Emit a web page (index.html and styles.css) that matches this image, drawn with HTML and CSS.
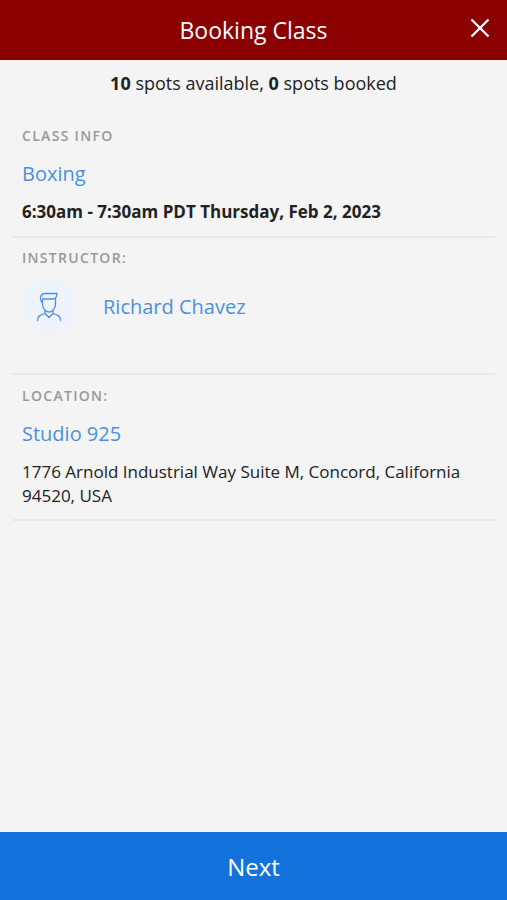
FILE: index.html
```html
<!DOCTYPE html>
<html lang="en">
<head>
<meta charset="utf-8">
<title>Booking Class</title>
<link rel="stylesheet" href="styles.css">
</head>
<body>
<header class="header">
  <h1 class="title">Booking Class</h1>
  <button class="close" aria-label="Close"><svg width="20" height="20" viewBox="0 0 20 20"><path d="M1.5 1.5 18.5 18.5M18.5 1.5 1.5 18.5" fill="none" stroke="#fff" stroke-width="2.3"/></svg></button>
</header>
<main class="content">
  <p class="spots"><b>10</b> spots available, <b>0</b> spots booked</p>
  <section class="card class-info">
    <h2 class="label">CLASS INFO</h2>
    <a class="link">Boxing</a>
    <p class="time">6:30am - 7:30am PDT Thursday, Feb 2, 2023</p>
  </section>
  <section class="card instructor">
    <h2 class="label">INSTRUCTOR:</h2>
    <div class="person">
      <span class="avatar"><svg width="26" height="30" viewBox="0 0 26 30" fill="none" stroke="#4a90e2" stroke-width="1.3" stroke-linecap="round" stroke-linejoin="round"><path d="M5.5 10C3 6 5 1.500 9 1.500H21C21 4 20.500 5 19.500 6V12C19.500 17 16 20 13 20S6.500 17 6.500 12V7H17L19.500 6"/><path d="M1.500 28.500C1.500 24 4 23 9 21.500L13 25.500L17 21.500C22 23 24.500 24 24.500 28.500M9 21.500V18.500M17 21.500V18.500"/></svg></span>
      <a class="link">Richard Chavez</a>
    </div>
  </section>
  <section class="card location">
    <h2 class="label">LOCATION:</h2>
    <a class="link">Studio 925</a>
    <p class="address">1776 Arnold Industrial Way Suite M, Concord, California 94520, USA</p>
  </section>
</main>
<button class="next">Next</button>
</body>
</html>
```
FILE: styles.css
```css
* { box-sizing: border-box; margin: 0; padding: 0; }
body { height: 900px; display: flex; flex-direction: column; background: #f4f4f4; color: #222; font-family: "Open Sans", sans-serif; overflow: hidden; }
button { border: 0; background: none; font-family: inherit; }
.header { height: 60px; flex: none; display: grid; grid-template-columns: 54px 1fr 54px; align-items: center; background: #8b0000; }
.title { grid-column: 2; text-align: center; color: #fff; font-size: 23px; line-height: 60px; font-weight: 400; }
.close { display: flex; justify-content: center; padding-bottom: 4px; }
.content { flex: 1; padding: 0 12px; }
.spots { height: 66px; padding-top: 10px; text-align: center; font-size: 18px; line-height: 26px; }
.card { border-bottom: 2px solid #e9e9e9; padding: 0 10px; }
.label { color: #999; font-size: 14px; line-height: 20px; font-weight: 600; letter-spacing: 1.3px; }
.link { display: block; color: #4a90e2; font-size: 20px; line-height: 28px; }
.class-info { height: 112px; }
.class-info .link, .location .link { margin-top: 14px; }
.time { margin-top: 12px; font-size: 17px; line-height: 24px; font-weight: 700; }
.instructor { height: 137px; padding-top: 10px; }
.person { display: flex; align-items: center; gap: 27px; margin-top: 12px; }
.avatar { display: flex; align-items: center; justify-content: center; width: 54px; height: 54px; border-radius: 50%; background: #eef3fc; }
.location { height: 146px; padding-top: 11px; }
.address { margin-top: 12px; font-size: 17px; line-height: 24px; }
.next { flex: none; height: 68px; background: #1472dc; color: #fff; font-size: 24px; }
```
